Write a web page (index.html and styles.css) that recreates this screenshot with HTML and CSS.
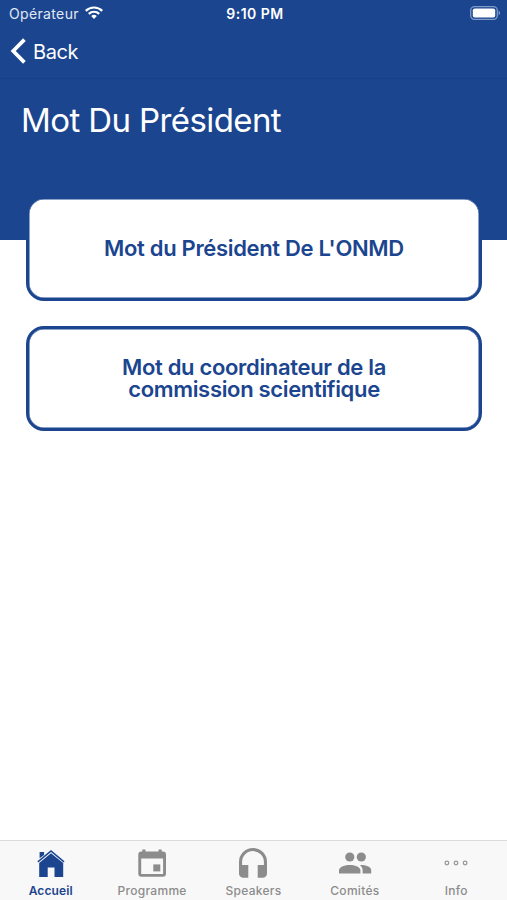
FILE: index.html
```html
<!DOCTYPE html>
<html lang="fr">
<head>
  <meta charset="UTF-8" />
  <meta name="viewport" content="width=device-width, initial-scale=1.0"/>
  <title>Mot Du Président</title>
  <link rel="stylesheet" href="styles.css">
</head>
<body>

  <!-- HEADER -->
  <header class="header">
    <div class="status-bar">
      <div class="carrier">
        <span>Opérateur</span>
        <svg class="wifi" viewBox="0 0 18 13">
          <path d="M.8 4.9a11.6 11.6 0 0 1 16.4 0M3.8 7.9a7.4 7.4 0 0 1 10.4 0" fill="none" stroke="#fff" stroke-width="2.2"/>
          <path d="M9 13 6.2 10.1a4 4 0 0 1 5.6 0z" fill="#fff"/>
        </svg>
      </div>
      <div class="time">9:10 PM</div>
      <svg class="battery" viewBox="0 0 31 14">
        <rect x="0.7" y="0.7" width="26.6" height="12.6" rx="3.8" fill="none" stroke="#7f9bca" stroke-width="1.3"/>
        <rect x="2.8" y="2.5" width="22.4" height="9" rx="1.8" fill="#fff"/>
        <path d="M28.6 4.8c2 .7 2 3.7 0 4.4z" fill="#7f9bca"/>
      </svg>
    </div>

    <nav class="nav-bar">
      <a class="back" href="#">
        <svg class="chevron" viewBox="0 0 16 26"><path d="M14.4 1.6 3.2 13l11.2 11.4" fill="none" stroke="#fff" stroke-width="3.7"/></svg>
        <span>Back</span>
      </a>
    </nav>

    <h1>Mot Du Président</h1>
  </header>

  <!-- MAIN CONTENT -->
  <main class="content">
    <a class="card" href="#"><span>Mot du Président De L'ONMD</span></a>
    <a class="card" href="#"><span>Mot du coordinateur de la<br>commission scientifique</span></a>
  </main>

  <!-- TABS -->
  <nav class="tabs">
    <a class="tab active" href="#">
      <svg viewBox="0 0 30 30">
        <path d="M3.6 10.3V4h4.5v2.9zM1.4 13.3 15 1.9l13.5 11.4-.9 1.1L15 3.9 2.3 14.4z"/>
        <path d="M15 5.3 27.2 15v14h-8.7v-9.5h-6.8V29H3.2V15z"/>
      </svg>
      <span>Accueil</span>
    </a>
    <a class="tab" href="#">
      <svg viewBox="0 0 30 30">
        <path fill-rule="evenodd" d="M5.3 1.4h3.2v2h13v-2h3.2v2h1.3a3 3 0 0 1 3 3v19.4a3 3 0 0 1-3 3H4.3a3 3 0 0 1-3-3V6.4a3 3 0 0 1 3-3h1zM4.2 10.5v15.4h21.9V10.5z"/>
        <path d="M16.3 16.4h7v7h-7z"/>
      </svg>
      <span>Programme</span>
    </a>
    <a class="tab" href="#">
      <svg viewBox="0 0 30 30">
        <path d="M15 0A14 14 0 0 0 1 14v11.5a4.3 4.3 0 0 0 4.3 4.3h5V17H4.1V14a10.9 10.9 0 0 1 21.8 0v3h-6.2v12.8h5a4.3 4.3 0 0 0 4.3-4.3V14A14 14 0 0 0 15 0z"/>
      </svg>
      <span>Speakers</span>
    </a>
    <a class="tab" href="#">
      <svg class="wide" viewBox="0 0 34 30">
        <circle cx="11.8" cy="9" r="4.6"/>
        <circle cx="23.3" cy="9" r="4.6"/>
        <path d="M1 25.5v-3.4c0-3.5 6.5-5.2 10.8-5.2s10.6 1.7 10.6 5.2v3.4z"/>
        <path d="M24.6 25.5v-3.4c0-2.2-1.2-3.8-2.8-5 4.5-.4 11.4 1.3 11.4 5v3.4z"/>
      </svg>
      <span>Comités</span>
    </a>
    <a class="tab" href="#">
      <svg viewBox="0 0 30 30">
        <g fill="none" stroke="#9a9a9a" stroke-width="1.3">
          <circle cx="5.9" cy="15" r="1.8"/>
          <circle cx="15" cy="15" r="1.8"/>
          <circle cx="24.1" cy="15" r="1.8"/>
        </g>
      </svg>
      <span>Info</span>
    </a>
  </nav>

</body>
</html>
```
FILE: styles.css
```css
* {
  box-sizing: border-box;
}

body {
  font-family: Inter, 'Liberation Sans', sans-serif;
  margin: 0;
  height: 100vh;
  display: flex;
  flex-direction: column;
  background: #fff;
  overflow: hidden;
}

a {
  color: inherit;
  text-decoration: none;
}

svg {
  display: block;
  fill: currentColor;
}

.header {
  height: 240px;
  flex-shrink: 0;
  background: #1b458f;
  color: #fff;
}

.status-bar {
  height: 27px;
  padding: 0 6px 0 9px;
  display: grid;
  grid-template-columns: 1fr auto 1fr;
  align-items: center;
  font-size: 14px;
}

.carrier {
  display: flex;
  align-items: center;
  gap: 6px;
  letter-spacing: 0.35px;
  color: #e1e8f4;
}

.wifi {
  width: 18px;
  height: 13px;
  margin-top: -2px;
}

.time {
  font-weight: 600;
  letter-spacing: 0.5px;
}

.battery {
  width: 31px;
  height: 14px;
  margin-top: -1px;
  justify-self: end;
}

.nav-bar {
  height: 52px;
  padding-left: 10px;
  border-bottom: 1px solid #183f85;
}

.back {
  height: 49px;
  display: inline-flex;
  align-items: center;
  gap: 7px;
  font-size: 20px;
  letter-spacing: -0.4px;
}

.chevron {
  width: 16px;
  height: 26px;
  margin-top: -2px;
}

h1 {
  margin: 20px 0 0 21px;
  font-size: 33px;
  line-height: 42px;
  font-weight: 400;
  letter-spacing: -0.6px;
  white-space: nowrap;
}

.content {
  flex: 1;
  margin-top: -44px;
  padding: 0 25px 0 26px;
  display: flex;
  flex-direction: column;
  gap: 25px;
}

.card {
  height: 105px;
  padding-bottom: 2px;
  display: flex;
  align-items: center;
  justify-content: center;
  text-align: center;
  background: #fff;
  color: #1b458f;
  border: 3px solid #1b458f;
  box-shadow: inset 0 0 0 0.5px #1b458f;
  border-radius: 18px;
  font-size: 22px;
  line-height: 22px;
  font-weight: 600;
  letter-spacing: -0.33px;
  white-space: nowrap;
}

.tabs {
  height: 60px;
  display: grid;
  grid-template-columns: repeat(5, 1fr);
  background: #f8f8f8;
  border-top: 1px solid #dcdcdc;
}

.tab {
  display: flex;
  flex-direction: column;
  align-items: center;
  padding-top: 7px;
  gap: 5px;
  color: #8c8c8c;
  font-size: 12px;
  line-height: 15px;
  font-weight: 500;
  letter-spacing: 0.3px;
}

.tab svg {
  width: 30px;
  height: 30px;
}

.tab svg.wide {
  width: 34px;
}

.active {
  color: #1b458f;
  font-weight: 600;
  letter-spacing: 0.1px;
}
```
